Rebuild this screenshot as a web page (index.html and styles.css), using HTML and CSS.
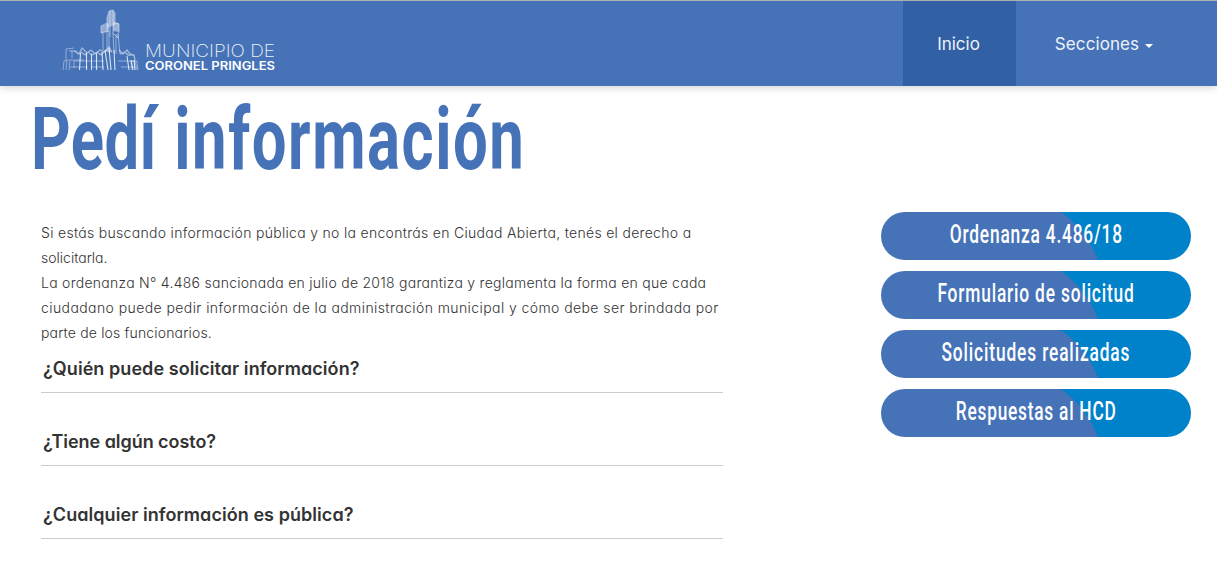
FILE: index.html
```html
<!DOCTYPE html>
<html lang="es">
<head>
<meta charset="utf-8">
<title>Pedí información</title>
<link rel="stylesheet" href="styles.css">
</head>
<body>
<header class="navbar">
  <a class="brand">
    <svg class="brand-logo" width="220" height="66" viewBox="60 7 220 66">
      <g class="tower" fill="none" stroke="#fff">
        <g fill="#fff" stroke="none">
          <path opacity=".4" d="M107 19l2-8 4-1 2 3v12l-8 3z"/>
          <path opacity=".4" d="M101 26l8-3v8l-8 2z"/>
          <path opacity=".45" d="M113 22l6 1v9l-6-1z"/>
        </g>
        <path opacity=".45" stroke-width="1" d="M107 52V18l2-7 4-1 2 3v10l4 1v8l-1 2 2 20M110 12v25M113 11v23M101 33v-7l6-3M101 33l8-2M103 33v17M109 31v22M113 33l1 20M116 34v20M114 34l4 4v-4"/>
        <path opacity=".4" stroke-width="1" d="M63 70l1-9 5-1h15M66 70l1-9M69 70l1-9M66 60V49l8-1M69 51h8M72 58V50M70 67h18M74 61h30M92 67h12M118 61h19l1 9M132 70l-1-9h4l2 9M121 67h15M74 61v7"/>
        <path opacity=".5" stroke-width="1.300" d="M74 51l5 3 3-6 5 5 4-3 4 4 5-4 5 2 4-5 3 5M77 54l4-2 4 3 3-3 4 3 5-3 4 3 5-5 6 2M119 50l4 4 4-4 3 4 4 1 1 5M120 54l5-2 3 3 5 0"/>
        <path opacity=".8" stroke-width="1.100" d="M80.500 53l-1 17M86.500 53v17M91.500 54v16M96.500 53v17M102 52l1 18M105 50l3 20M109 48l2 22M114 50l1 20M127 56l2 14M131 60l2 10M134 60l1 10"/>
      </g>
      <text class="logo-top" x="145" y="57" textLength="130" lengthAdjust="spacingAndGlyphs">MUNICIPIO DE</text>
      <text class="logo-bottom" x="145" y="70" textLength="130" lengthAdjust="spacingAndGlyphs">CORONEL PRINGLES</text>
    </svg>
  </a>
  <nav class="menu">
    <a class="menu-item active">Inicio</a>
    <a class="menu-item sections">Secciones<span class="caret"></span></a>
  </nav>
</header>
<main class="page">
  <h1 class="title"><span class="title-text">Pedí <span class="title-wide">información</span></span></h1>
  <div class="columns">
    <section class="content">
      <p class="intro">
        <span class="line l1">Si estás buscando información pública y no la encontrás en Ciudad Abierta, tenés el derecho a</span>
        <span class="line l2">solicitarla.</span>
        <span class="line l3">La ordenanza N° 4.486 sancionada en julio de 2018 garantiza y reglamenta la forma en que cada</span>
        <span class="line l4">ciudadano puede pedir información de la administración municipal y cómo debe ser brindada por</span>
        <span class="line l5">parte de los funcionarios.</span>
      </p>
      <h2 class="question q1">¿Quién puede solicitar información?</h2>
      <h2 class="question q2">¿Tiene algún costo?</h2>
      <h2 class="question q3">¿Cualquier información es pública?</h2>
    </section>
    <aside class="actions">
      <a class="pill"><span class="pill-text b1">Ordenanza 4.486/18</span></a>
      <a class="pill"><span class="pill-text b2">Formulario de solicitud</span></a>
      <a class="pill"><span class="pill-text b3">Solicitudes realizadas</span></a>
      <a class="pill"><span class="pill-text b4">Respuestas al HCD</span></a>
    </aside>
  </div>
</main>
</body>
</html>
```
FILE: styles.css
```css
* { box-sizing: border-box; }
body {
  margin: 0;
  height: 578px;
  overflow: hidden;
  background: #fff;
  color: #333;
  font-family: Inter, "Liberation Sans", sans-serif;
  font-feature-settings: "cv11";
}
.navbar {
  display: flex;
  justify-content: space-between;
  height: 86px;
  padding-right: 30px;
  border-top: 1px solid #b0b0b0;
  background: #4673b8;
  box-shadow: 0 1px 8px rgba(0, 0, 0, .2);
}
.brand { padding: 6px 0 0 60px; }
.brand-logo { display: block; }
.logo-top { fill: #fff; opacity: .9; font-size: 17.500px; font-weight: 200; }
.logo-bottom { fill: #fff; font-size: 11.500px; font-weight: 600; }
.menu { display: flex; }
.menu-item {
  display: flex;
  align-items: center;
  justify-content: center;
  height: 85px;
  color: #edf2fa;
  font-size: 17px;
}
.active { width: 113px; background: #3160a4; padding-right: 2px; }
.sections { width: 171px; padding-left: 5px; letter-spacing: .1px; }
.caret {
  margin: 4px 0 0 6px;
  border: 4px solid transparent;
  border-top-color: #fff;
  border-bottom: 0;
}
.title {
  height: 104px;
  margin: 0;
  padding-left: 31px;
  color: #4673b8;
  font: 700 88px/106px Roboto, sans-serif;
}
.title-text { display: inline-block; transform: scaleX(.7); transform-origin: 0 50%; white-space: nowrap; letter-spacing: .600px; }
.title-wide { margin-left: 2.500px; letter-spacing: 2.200px; }
.columns { display: flex; justify-content: space-between; padding: 22px 26px 0 41px; }
.content { width: 682px; }
.intro { margin: 0; padding: 8px 0 1px; font-size: 14px; font-weight: 300; line-height: 25px; }
.line { display: block; white-space: nowrap; }
.l1 { letter-spacing: .305px; }
.l3 { letter-spacing: .270px; }
.l4 { letter-spacing: .415px; }
.l5 { letter-spacing: .160px; }
.question {
  height: 47px;
  margin: 0 0 26px;
  padding-left: 2px;
  border-bottom: 1px solid #ccc;
  font-size: 18px;
  font-weight: 600;
  line-height: 46px;
  white-space: nowrap;
}
.q1, .q3 { letter-spacing: .060px; }
.q2 { letter-spacing: -.050px; }
.actions { display: flex; flex-direction: column; gap: 11px; width: 310px; }
.pill {
  display: flex;
  justify-content: center;
  height: 48px;
  border-radius: 24px;
  background:
    linear-gradient(#4673b8, #4673b8) 0 0 / 118px 100% no-repeat,
    radial-gradient(circle 107px at 118px 86px, #4673b8 105.500px, #0082ca 106.500px);
  color: #fff;
  font: 500 25.500px/45px Roboto, sans-serif;
}
.pill-text { display: inline-block; transform: scaleX(.68); white-space: nowrap; }
.b1 { letter-spacing: 1.180px; }
.b2 { letter-spacing: 1.220px; }
.b3 { letter-spacing: 1.270px; }
.b4 { letter-spacing: 1.090px; }
```
